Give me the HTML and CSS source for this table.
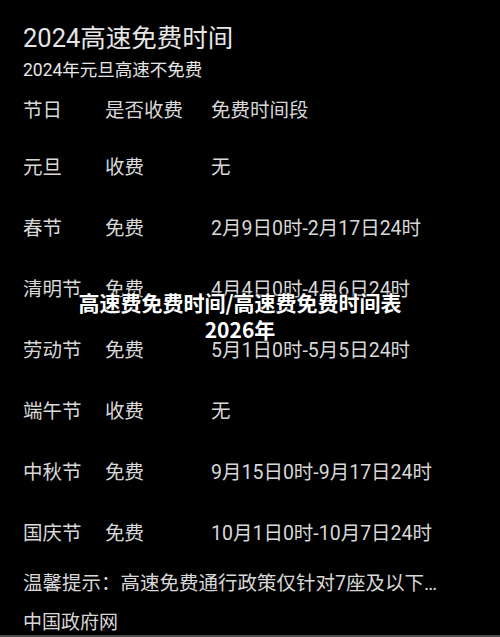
FILE: index.html
```html
<!DOCTYPE html>
<html lang="zh-CN">
<head>
  <meta charset="UTF-8">
  <title>2024高速免费时间</title>
  <link rel="stylesheet" href="styles.css">
</head>
<body>

  <div class="page">
    <h1 class="title">2024高速免费时间</h1>
    <div class="subtitle">2024年元旦高速不免费</div>

    <div class="table">
      <div class="row head">
        <span>节日</span><span>是否收费</span><span>免费时间段</span>
      </div>
      <div class="row"><span>元旦</span><span>收费</span><span>无</span></div>
      <div class="row"><span>春节</span><span>免费</span><span>2月9日0时-2月17日24时</span></div>
      <div class="row"><span>清明节</span><span>免费</span><span>4月4日0时-4月6日24时</span></div>
      <div class="row"><span>劳动节</span><span>免费</span><span>5月1日0时-5月5日24时</span></div>
      <div class="row"><span>端午节</span><span>收费</span><span>无</span></div>
      <div class="row"><span>中秋节</span><span>免费</span><span>9月15日0时-9月17日24时</span></div>
      <div class="row"><span>国庆节</span><span>免费</span><span>10月1日0时-10月7日24时</span></div>
    </div>

    <div class="tip">温馨提示：高速免费通行政策仅针对7座及以下…</div>
    <div class="source">中国政府网</div>

    <div class="caption">高速费免费时间/高速费免费时间表2026年</div>
  </div>

</body>
</html>
```

FILE: styles.css
```css
body {
  margin: 0;
  background: #000;
  font-family: Roboto, "Noto Sans CJK SC", sans-serif;
  color: #d8d8d8;
}

.page {
  position: relative;
  height: 637px;
  box-sizing: border-box;
  padding: 22px 0 0 23px;
  border-bottom: 2px solid #4e4e4e;
  overflow: hidden;
}

.title {
  margin: 0;
  font-size: 25.5px;
  font-weight: normal;
  line-height: 32px;
  color: #e6e6e6;
}

.subtitle {
  margin-top: 4px;
  font-size: 17.5px;
  line-height: 24px;
  color: #e6e6e6;
}

.table {
  font-size: 19.5px;
}

.row {
  display: grid;
  grid-template-columns: 82px 106px 1fr;
  align-items: center;
  height: 61px;
}

.row.head {
  height: 53px;
}

.tip {
  margin-top: 10px;
  font-size: 19.5px;
  line-height: 24px;
}

.source {
  margin-top: 15px;
  font-size: 19px;
  line-height: 24px;
}

.caption {
  position: absolute;
  top: 289px;
  left: 70px;
  width: 340px;
  text-align: center;
  font-family: "Noto Sans CJK SC", sans-serif;
  font-size: 21px;
  font-weight: bold;
  line-height: 27px;
  color: #fff;
  text-shadow: 0 0 3px #000, 0 0 2px #000;
}
```
